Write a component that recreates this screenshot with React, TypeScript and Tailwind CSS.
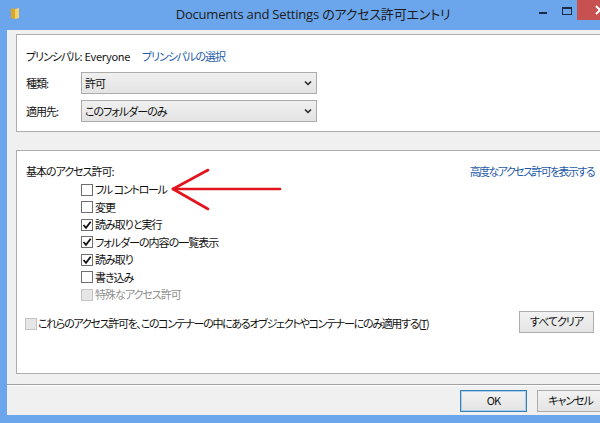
import React from "react";

const jp = "font-['Noto_Sans_CJK_JP',sans-serif] [font-feature-settings:'palt'] tracking-[-1px]";

function Box({ checked, disabled }: { checked?: boolean; disabled?: boolean }) {
  return (
    <span
      className={
        "w-[12px] h-[12px] border flex items-center justify-center shrink-0 " +
        (disabled ? "border-[#c4c4c4] bg-[#e6e6e6]" : "border-[#6e6e6e] bg-white")
      }
    >
      {checked && (
        <svg width="10" height="10" viewBox="0 0 10 10">
          <polyline points="1.5,5 4,7.8 8.7,1.8" fill="none" stroke="#111" strokeWidth="1.8" />
        </svg>
      )}
    </span>
  );
}

function Check({ label, checked, disabled }: { label: React.ReactNode; checked?: boolean; disabled?: boolean }) {
  return (
    <div className="h-[17.5px] flex items-center gap-[2px]">
      <Box checked={checked} disabled={disabled} />
      <span className={disabled ? "text-[#8f8f8f]" : "text-[#111]"}>{label}</span>
    </div>
  );
}

function Select({ value }: { value: string }) {
  return (
    <div className="w-[236px] h-[22px] border border-[#acacac] bg-gradient-to-b from-[#f0f0f0] to-[#e3e3e3] flex items-center pl-[3px] pr-[4px]">
      <span className="flex-1 text-[#111]">{value}</span>
      <svg width="8" height="6" viewBox="0 0 8 6">
        <polyline points="1,1.5 4,4.5 7,1.5" fill="none" stroke="#222" strokeWidth="1.5" />
      </svg>
    </div>
  );
}

function Button({ label, primary }: { label: string; primary?: boolean }) {
  return (
    <div
      className={
        "h-[22px] flex items-center justify-center border text-[#111] bg-gradient-to-b from-[#f2f2f2] to-[#e4e4e4] " +
        (primary ? "border-[#3c7fb1] ring-1 ring-inset ring-[#a8d0ee]" : "border-[#acacac]")
      }
    >
      {label}
    </div>
  );
}

export default function App() {
  return (
    <div className={"w-[600px] h-[423px] overflow-hidden text-[11px] leading-none " + jp}>
      <div className="w-[630px] h-[423px] bg-[#6ba6ec] flex flex-col">
        {/* title bar */}
        <div className="h-[30px] relative flex items-center justify-center shrink-0">
          <svg className="absolute left-[10px] top-[7px]" width="10" height="13" viewBox="0 0 10 13">
            <path d="M1 1 L5 2 L5 12 L1 11 Z" fill="#d9a72a" />
            <path d="M5 2 L9 1 L9 11 L5 12 Z" fill="#f3d26b" />
          </svg>
          <span className="text-[13px] tracking-[-0.2px] text-[#1b1b1b] font-['Open_Sans','Noto_Sans_CJK_JP',sans-serif] [font-feature-settings:'palt'] -mt-[1px] ml-[-4px]">
            Documents and Settings のアクセス許可エントリ
          </span>
          <div className="absolute left-[539px] top-[12px] w-[8px] h-[2px] bg-[#1d2b45]" />
          <div className="absolute left-[562px] top-[7px] w-[10px] h-[8px] border border-[#1d2b45] border-t-2" />
          <div className="absolute left-[577px] top-0 w-[46px] h-[20px] bg-[#c75050] flex items-center justify-center">
            <svg width="10" height="10" viewBox="0 0 10 10">
              <path d="M1 1 L9 9 M9 1 L1 9" stroke="#fff" strokeWidth="2" />
            </svg>
          </div>
        </div>

        {/* client */}
        <div className="mx-[7px] h-[385px] bg-[#f0f0f0] flex flex-col relative">
          {/* panel 1 */}
          <div className="mt-[4px] ml-[9px] mr-[7px] h-[98px] bg-white border border-[#adadad] pl-[9px] pt-[11px] flex flex-col">
            <div className="h-[20px] flex items-center text-[#111]">
              <span>プリンシパル:</span>
              <span className="ml-[3px] tracking-[-0.3px]">Everyone</span>
              <span className="ml-[12px] text-[#1e5aa8]">プリンシパルの選択</span>
            </div>
            <div className="mt-[6px] flex items-center">
              <span className="w-[55px] text-[#111]">種類:</span>
              <Select value="許可" />
            </div>
            <div className="mt-[6px] flex items-center">
              <span className="w-[55px] text-[#111]">適用先:</span>
              <Select value="このフォルダーのみ" />
            </div>
          </div>

          {/* panel 2 */}
          <div className="mt-[18px] ml-[9px] mr-[7px] h-[224px] bg-white border border-[#adadad] pl-[9px] pr-[21px] pt-[11px] flex flex-col">
            <div className="h-[19px] flex items-center justify-between">
              <span className="text-[#111]">基本のアクセス許可:</span>
              <span className="text-[#1e5aa8] tracking-[-1.6px]">高度なアクセス許可を表示する</span>
            </div>
            <div className="ml-[55px] flex flex-col">
              <Check
                label={
                  <span className="tracking-[-1.3px]">
                    フル<span className="ml-[2px]">コントロール</span>
                  </span>
                }
              />
              <Check label="変更" />
              <Check label="読み取りと実行" checked />
              <Check label="フォルダーの内容の一覧表示" checked />
              <Check label="読み取り" checked />
              <Check label="書き込み" />
              <Check label="特殊なアクセス許可" disabled />
            </div>
            <div className="mt-[6px] flex items-start justify-between">
              <div className="mt-[6px] -ml-[1px] h-[16px] flex items-center gap-[1px] whitespace-nowrap">
                <Box disabled />
                <span className="text-[#111] tracking-[-1.3px]">
                  これらのアクセス許可を、このコンテナーの中にあるオブジェクトやコンテナーにのみ適用する(<span className="underline">T</span>)
                </span>
              </div>
              <div className="w-[75px] mt-[1px] shrink-0">
                <Button label="すべてクリア" />
              </div>
            </div>
          </div>

          {/* separator */}
          <div className="mt-[10px] h-[1px] bg-[#a0a0a0]" />
          <div className="h-[1px] bg-white" />
          {/* footer */}
          <div className="flex-1 flex items-center justify-end pr-[19px] gap-[10px]">
            <div className="w-[67px]">
              <Button label="OK" primary />
            </div>
            <div className="w-[67px]">
              <Button label="キャンセル" />
            </div>
          </div>

          {/* red arrow overlay */}
          <svg className="absolute left-0 top-0 pointer-events-none" width="600" height="385">
            <g transform="translate(-7,-30)" stroke="#e2141d" strokeWidth="2.6" strokeLinecap="round" fill="none">
              <path d="M280 189 L173 189" />
              <path d="M173 189 L208 170" />
              <path d="M173 189 L208 209" />
            </g>
          </svg>
        </div>
      </div>
    </div>
  );
}
